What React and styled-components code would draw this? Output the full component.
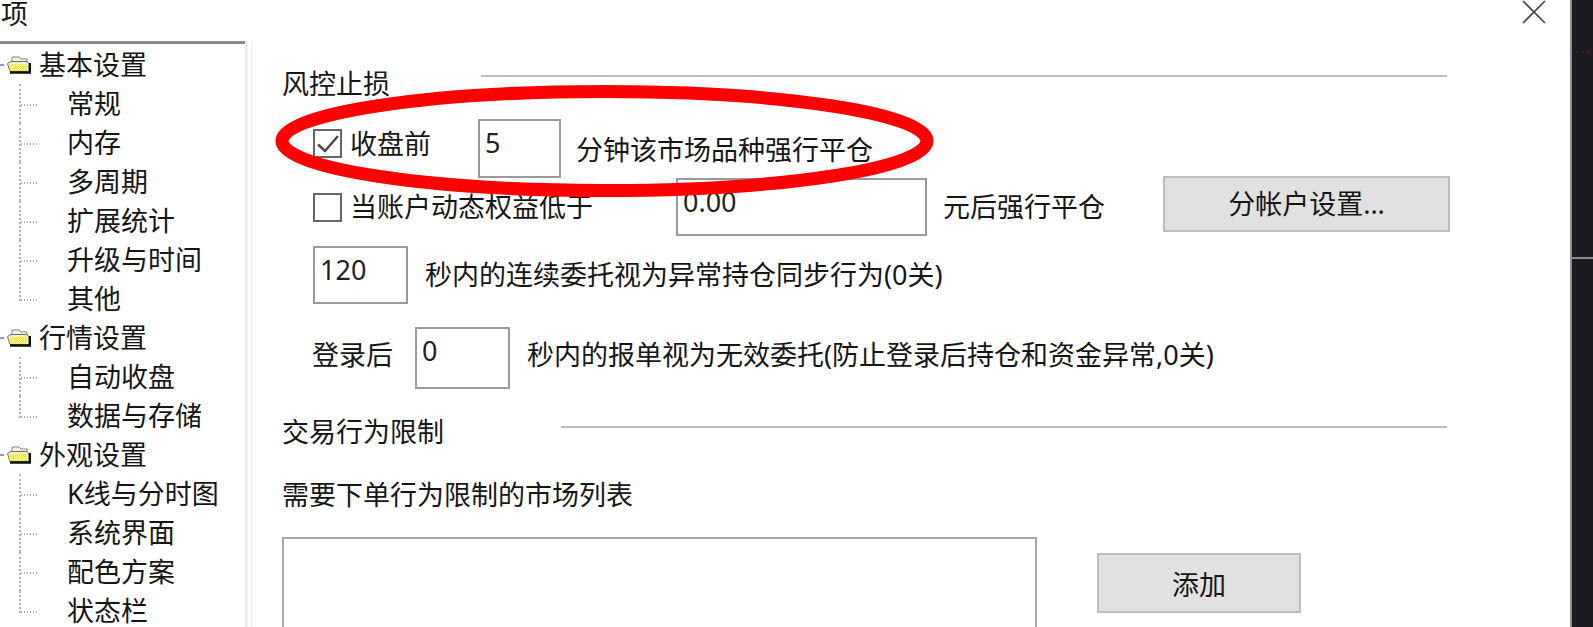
import React from 'react';
import styled, { createGlobalStyle } from 'styled-components';

const GlobalStyle = createGlobalStyle`
  html, body { margin: 0; padding: 0; background: #fff; }
  body {
    font-family: "Noto Sans", "Noto Sans CJK SC", sans-serif;
    color: #161616;
  }
`;

const Page = styled.div`
  display: flex;
  width: 1593px;
  height: 627px;
  overflow: hidden;
  background: #fff;
`;

const Dialog = styled.div`
  flex: 1;
  min-width: 0;
  display: flex;
  flex-direction: column;
  border-right: 2px solid #8f8f8f;
`;

const TitleBar = styled.div`
  height: 41px;
  flex: none;
  display: flex;
  justify-content: space-between;
  align-items: flex-start;
  padding-right: 24px;
`;

const TitleText = styled.span`
  margin-left: -26px;
  font-size: 27px;
  line-height: 28px;
`;

const CloseIcon = () => (
  <svg width="24" height="24" viewBox="0 0 24 24" fill="none" stroke="#444" strokeWidth="1.6">
    <path d="M1 1 L23 23 M23 1 L1 23" />
  </svg>
);

const Body = styled.div`
  flex: 1;
  min-height: 0;
  display: flex;
`;

const TreePane = styled.div`
  width: 245px;
  flex: none;
  border-top: 3px solid #8c8c8c;
  box-shadow: 3px 0 0 #ececec, 6px 0 0 #fff, 7px 0 0 #ececec;
  padding-top: 1px;
  overflow: hidden;
`;

const GroupRow = styled.div`
  height: 39px;
  display: flex;
  align-items: center;
  font-size: 27px;
`;

const Expander = styled.span`
  width: 4px;
  height: 2px;
  background: #9a9a9a;
  margin-right: 3px;
`;

const GroupLabel = styled.span`
  margin-left: 8px;
  line-height: 39px;
`;

const Folder = () => (
  <svg width="24" height="18" viewBox="0 0 24 18">
    <defs>
      <pattern id="dither" width="2" height="2" patternUnits="userSpaceOnUse">
        <rect width="2" height="2" fill="#eeea20" />
        <rect width="1" height="1" fill="#fbfbc0" />
        <rect x="1" y="1" width="1" height="1" fill="#fbfbc0" />
      </pattern>
    </defs>
    <path d="M5 1 L12 1 L14 3 L20 3 L20 6 L5 6 Z" fill="#f6f3dc" stroke="#85857a" strokeWidth="1" />
    <path d="M0.5 7.5 L4 5.5 L20 5.5 L22 8 L22 15.5 L3 15.5 Z" fill="#f4f1d0" stroke="#6e6e64" strokeWidth="1" />
    <rect x="3" y="8" width="17" height="7" fill="url(#dither)" />
    <path d="M3 16.5 L23 16.5 L23 7" fill="none" stroke="#101010" strokeWidth="2.4" />
  </svg>
);

const ChildRow = styled.div`
  height: 39px;
  margin-left: 19px;
  display: flex;
  align-items: center;
  font-size: 27px;
`;

const Connector = styled.span`
  align-self: flex-start;
  flex: none;
  width: 16px;
  height: ${props => props.last ? '22px' : '39px'};
  border-left: 2px dotted #b4b4b4;
  background: repeating-linear-gradient(90deg, #a8a8a8 0 1px, transparent 1px 3px)
    0 20px / 100% 2px no-repeat;
`;

const ChildLabel = styled.span`
  margin-left: 30px;
  line-height: 39px;
  white-space: nowrap;
`;

const Main = styled.div`
  flex: 1;
  min-width: 0;
  display: flex;
  flex-direction: column;
  padding: 20px 0 0 37px;
  font-size: 27px;
  & > * { flex: none; }
`;

const SectionHead = styled.div`
  display: flex;
  align-items: flex-start;
  height: ${props => props.h}px;
  width: 1165px;
  margin-top: ${props => props.top || 0}px;
`;

const SectionTitle = styled.span`
  line-height: 48px;
  margin-top: ${props => props.up}px;
  white-space: nowrap;
`;

const Rule = styled.span`
  flex: 1;
  height: 2px;
  background: #bcbcbc;
  margin-left: ${props => props.gap}px;
  margin-top: 14px;
`;

const Row = styled.div`
  display: flex;
  align-items: center;
  height: ${props => props.h}px;
  padding-left: ${props => props.indent}px;
  margin-top: ${props => props.top || 0}px;
`;

const CheckBox = styled.span`
  width: 29px;
  height: 29px;
  box-sizing: border-box;
  flex: none;
  border: 2px solid #666;
  margin-right: 8px;
  margin-top: ${props => props.down || 0}px;
  & > svg { display: block; }
`;

const Label = styled.span`
  white-space: nowrap;
  line-height: 40px;
  margin-left: ${props => props.left || 0}px;
  margin-top: ${props => props.down || 0}px;
`;

const TextBox = styled.span`
  display: block;
  box-sizing: border-box;
  flex: none;
  width: ${props => props.w}px;
  height: ${props => props.h}px;
  margin-left: ${props => props.left || 0}px;
  border: 2px solid #9a9a9a;
  background: #fff;
  padding-left: 5px;
  line-height: ${props => props.lh || 44}px;
  font-size: 27px;
  color: #222;
  overflow: hidden;
`;

const Button = styled.button`
  flex: none;
  box-sizing: border-box;
  width: ${props => props.w}px;
  height: ${props => props.h}px;
  margin-left: ${props => props.left || 0}px;
  margin-top: ${props => props.up || 0}px;
  border: 2px solid #bdbdbd;
  background: #e1e1e1;
  font: inherit;
  color: #161616;
  padding: 0 0 ${props => props.lift || 0}px;
`;

const ListArea = styled.div`
  display: flex;
  align-items: flex-start;
  margin-top: 22px;
`;

const ListBox = styled.div`
  width: 755px;
  height: 120px;
  box-sizing: border-box;
  border: 2px solid #a8a8a8;
  flex: none;
`;

const Strip = styled.div`
  width: 21px;
  flex: none;
  background: #1b1c20;
  display: flex;
  flex-direction: column;
`;

const RedDots = styled.div`
  display: flex;
  gap: 4px;
  margin: 51px 0 0 4px;
  & > span {
    width: 2px;
    height: 2px;
    background: #6a1015;
  }
`;

const StripLine = styled.div`
  height: 2px;
  background: #8a8a8a;
  margin-top: 204px;
`;

const Ring = styled.svg`
  position: absolute;
  left: 270px;
  top: 80px;
  pointer-events: none;
`;

const Stage = styled.div`
  position: relative;
`;

const TREE = [
  { label: '基本设置', items: ['常规', '内存', '多周期', '扩展统计', '升级与时间', '其他'] },
  { label: '行情设置', items: ['自动收盘', '数据与存储'] },
  { label: '外观设置', items: ['K线与分时图', '系统界面', '配色方案', '状态栏'] },
];

export default function App() {
  return (
    <Stage>
      <GlobalStyle />
      <Page>
        <Dialog>
          <TitleBar>
            <TitleText>选项</TitleText>
            <CloseIcon />
          </TitleBar>
          <Body>
            <TreePane>
              {TREE.map(group => (
                <div key={group.label}>
                  <GroupRow>
                    <Expander />
                    <Folder />
                    <GroupLabel>{group.label}</GroupLabel>
                  </GroupRow>
                  {group.items.map((item, i) => (
                    <ChildRow key={item}>
                      <Connector last={i === group.items.length - 1} />
                      <ChildLabel>{item}</ChildLabel>
                    </ChildRow>
                  ))}
                </div>
              ))}
            </TreePane>
            <Main>
              <SectionHead h={58}>
                <SectionTitle up={-1}>风控止损</SectionTitle>
                <Rule gap={91} />
              </SectionHead>
              <Row h={59} indent={31}>
                <CheckBox down={-10}>
                  <svg width="25" height="25" viewBox="0 0 25 25" fill="none" stroke="#4a4a4a" strokeWidth="2.4">
                    <path d="M3 13.5 L10 20 L23 5" />
                  </svg>
                </CheckBox>
                <Label down={-10}>收盘前</Label>
                <TextBox w={83} h={59} left={47}>5</TextBox>
                <Label left={15} down={3}>分钟该市场品种强行平仓</Label>
              </Row>
              <Row h={58} indent={31}>
                <CheckBox />
                <Label>当账户动态权益低于</Label>
                <TextBox w={251} h={58} left={83}>0.00</TextBox>
                <Label left={16}>元后强行平仓</Label>
                <Button w={287} h={56} left={58} up={-6} lift={4}>分帐户设置...</Button>
              </Row>
              <Row h={58} top={10} indent={31}>
                <TextBox w={95} h={58}>120</TextBox>
                <Label left={17}>秒内的连续委托视为异常持仓同步行为(0关)</Label>
              </Row>
              <Row h={62} top={23} indent={30}>
                <Label down={-6}>登录后</Label>
                <TextBox w={95} h={62} left={22}>0</TextBox>
                <Label left={17} down={-6}>秒内的报单视为无效委托(防止登录后持仓和资金异常,0关)</Label>
              </Row>
              <SectionHead h={63} top={23}>
                <SectionTitle up={-4}>交易行为限制</SectionTitle>
                <Rule gap={117} />
              </SectionHead>
              <Label>需要下单行为限制的市场列表</Label>
              <ListArea>
                <ListBox />
                <Button w={204} h={60} left={60} up={16}>添加</Button>
              </ListArea>
            </Main>
          </Body>
        </Dialog>
        <Strip>
          <RedDots><span /><span /><span /></RedDots>
          <StripLine />
        </Strip>
      </Page>
      <Ring width="672" height="124" viewBox="0 0 672 124" fill="none">
        <ellipse cx="334.5" cy="61" rx="322.5" ry="49.5" stroke="#fe0000" strokeWidth="13" />
      </Ring>
    </Stage>
  );
}
